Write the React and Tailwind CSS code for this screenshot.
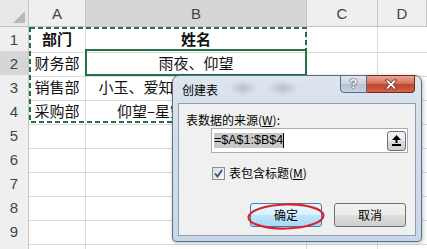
import React from 'react'

const COLS = 'grid grid-cols-[29px_57px_221px_71px_1fr]'
const CJK = "font-['Noto_Sans_CJK_SC',sans-serif]"

const rows = [
  { n: 1, a: '部门', b: '姓名', bold: true },
  { n: 2, a: '财务部', b: '雨夜、仰望', active: true },
  { n: 3, a: '销售部', b: '小玉、爱知趣、小星空、浅笑' },
  { n: 4, a: '采购部', b: '仰望–星空、雨夜、小玉' },
  { n: 5 }, { n: 6 }, { n: 7 }, { n: 8 }, { n: 9 }, { n: 10 },
]

function Sheet() {
  return (
    <div className="relative">
      <div className={`${COLS} h-[27px]`}>
        <div className="relative bg-[#e8e8e8] border-r border-b border-[#c4c4c4]">
          <svg className="absolute right-[3px] bottom-[3px]" width="12" height="12">
            <polygon points="12,0 12,12 0,12" fill="#b9b9b9" />
          </svg>
        </div>
        {['A', 'B', 'C', 'D'].map((c) => (
          <div
            key={c}
            className={`flex items-center justify-center pt-[2px] border-r border-b border-[#c4c4c4] text-[15px] text-[#444] font-['Liberation_Sans',sans-serif] ${
              c === 'B' ? 'bg-[#d6d6d6]' : 'bg-[#efefef]'
            }`}
          >
            {c}
          </div>
        ))}
      </div>

      {rows.map((r) => (
        <div key={r.n} className={`${COLS} h-[24px]`}>
          <div
            className={`flex items-center justify-center pt-[2px] border-r border-b border-[#c4c4c4] text-[15px] text-[#444] font-['Liberation_Sans',sans-serif] ${
              r.active ? 'bg-[#d6d6d6]' : 'bg-[#efefef]'
            }`}
          >
            {r.n}
          </div>
          <div className={`flex items-center justify-center border-r border-b border-[#d9d9d9] text-[15px] text-[#111] ${CJK} ${r.bold ? 'font-bold' : ''}`}>
            {r.a}
          </div>
          <div className={`flex items-center justify-center overflow-hidden whitespace-nowrap border-r border-b border-[#d9d9d9] text-[15px] text-[#111] ${CJK} ${r.bold ? 'font-bold' : ''}`}>
            {r.b}
          </div>
          <div className="border-r border-b border-[#d9d9d9]" />
          <div className="border-b border-[#d9d9d9]" />
        </div>
      ))}

      {/* copy range and active cell */}
      <svg className="absolute inset-0 pointer-events-none" width="427" height="270">
        <rect x="30" y="28" width="276" height="94" fill="none" stroke="#217346" strokeWidth="2" strokeDasharray="5 3" />
        <rect x="86" y="50" width="220" height="25" fill="none" stroke="#217346" strokeWidth="2" />
      </svg>
    </div>
  )
}

function UploadIcon() {
  return (
    <svg width="9" height="11" viewBox="0 0 9 11">
      <polygon points="4.5,0 9,5 0,5" fill="#000" />
      <rect x="3.5" y="4" width="2" height="4" fill="#000" />
      <rect x="0" y="9" width="9" height="2" fill="#000" />
    </svg>
  )
}

function Dialog() {
  return (
    <div className="absolute left-[172px] top-[75px] w-[250px] h-[167px] flex flex-col rounded-t-[7px] rounded-b-[4px] border border-[#5d6f86] bg-[linear-gradient(180deg,#dde5ee_0%,#d3deea_40%,#c9d8e9_100%)] shadow-[1px_1px_4px_rgba(0,0,0,0.25)]">
      {/* caption */}
      <div className="relative h-[27px] flex items-start pl-[9px] bg-[radial-gradient(ellipse_14px_8px_at_70px_12px,rgba(120,130,140,0.35),transparent),radial-gradient(ellipse_16px_8px_at_110px_12px,rgba(120,130,140,0.35),transparent)] rounded-t-[7px]">
        <span className={`mt-[5px] text-[12px] text-black ${CJK}`}>创建表</span>
        <div className="ml-auto mr-[6px] -mt-px flex">
          <div className="w-[27px] h-[18px] flex items-center justify-center rounded-bl-[4px] border border-[#5a6b80] bg-[linear-gradient(180deg,#dfe6ee_0%,#cbd5e0_50%,#b6c3d1_51%,#c6d2de_100%)]">
            <span className="text-[13px] font-bold text-white font-['Liberation_Sans',sans-serif] [text-shadow:0_0_2px_#2b3440,0_0_1px_#2b3440]">?</span>
          </div>
          <div className="w-[48px] h-[18px] flex items-center justify-center rounded-br-[4px] border border-l-0 border-[#6b2a20] bg-[linear-gradient(180deg,#e9a794_0%,#d7735b_45%,#c1432a_55%,#d2654a_100%)]">
            <svg width="16" height="11" viewBox="0 0 16 11">
              <path d="M2 1 H5.5 L8 4 L10.5 1 H14 L10 5.5 L14 10 H10.5 L8 7 L5.5 10 H2 L6 5.5 Z" fill="#fff" stroke="#5b2317" strokeWidth="0.8" />
            </svg>
          </div>
        </div>
      </div>

      {/* client area */}
      <div className={`flex-1 mx-[5px] mb-[5px] border border-[#8b9fb5] bg-[#f0f0f0] flex flex-col text-[12px] text-black ${CJK}`}>
        <div className="pl-[7px] pt-[8px] leading-[16px]">
          表数据的来源(<span className="underline">W</span>):
        </div>
        <div className="ml-[32px] w-[197px] h-[25px] border border-[#abadb3] bg-white flex items-center pl-[2px] pr-[1px]">
          <span className="bg-[#c8c8c8] text-[12.5px] leading-[15px] font-['Liberation_Sans',sans-serif]">=$A$1:$B$4</span>
          <span className="w-px h-[15px] bg-black" />
          <div className="ml-auto w-[19px] h-[20px] rounded-[3px] border border-[#707070] bg-[linear-gradient(180deg,#f2f2f2_0%,#ebebeb_50%,#dddddd_51%,#cfcfcf_100%)] flex items-center justify-center">
            <UploadIcon />
          </div>
        </div>
        <div className="mt-[12px] ml-[33px] h-[16px] flex items-center gap-[4px]">
          <div className="w-[13px] h-[13px] border border-[#8e8f8f] bg-[linear-gradient(135deg,#d7dde6_0%,#f4f6f9_100%)] flex items-center justify-center">
            <svg width="9" height="9" viewBox="0 0 9 9">
              <path d="M1 4.5 L3.5 7.5 L8 1" fill="none" stroke="#3d4f80" strokeWidth="1.8" />
            </svg>
          </div>
          <span className="leading-[16px]">
            表包含标题(<span className="underline">M</span>)
          </span>
        </div>
        <div className="mt-[22px] flex justify-end gap-[12px] pr-[9px]">
          <div className="w-[72px] h-[24px] rounded-[3px] border border-[#3c7fb1] bg-[linear-gradient(180deg,#eaf6fd_0%,#d9f0fc_50%,#bee6fd_51%,#a7d9f5_100%)] flex items-center justify-center">
            确定
          </div>
          <div className="w-[72px] h-[24px] rounded-[3px] border border-[#707070] bg-[linear-gradient(180deg,#f2f2f2_0%,#ebebeb_50%,#dddddd_51%,#cfcfcf_100%)] flex items-center justify-center">
            取消
          </div>
        </div>
      </div>
    </div>
  )
}

export default function App() {
  return (
    <div className="relative w-[427px] h-[249px] overflow-hidden bg-white">
      <Sheet />
      <Dialog />
      <svg className="absolute left-[246px] top-[202px] pointer-events-none" width="80" height="29">
        <ellipse cx="40" cy="14.5" rx="37.5" ry="12" fill="none" stroke="#d9252d" strokeWidth="2.2" transform="rotate(-1.5 40 14.5)" />
      </svg>
    </div>
  )
}
